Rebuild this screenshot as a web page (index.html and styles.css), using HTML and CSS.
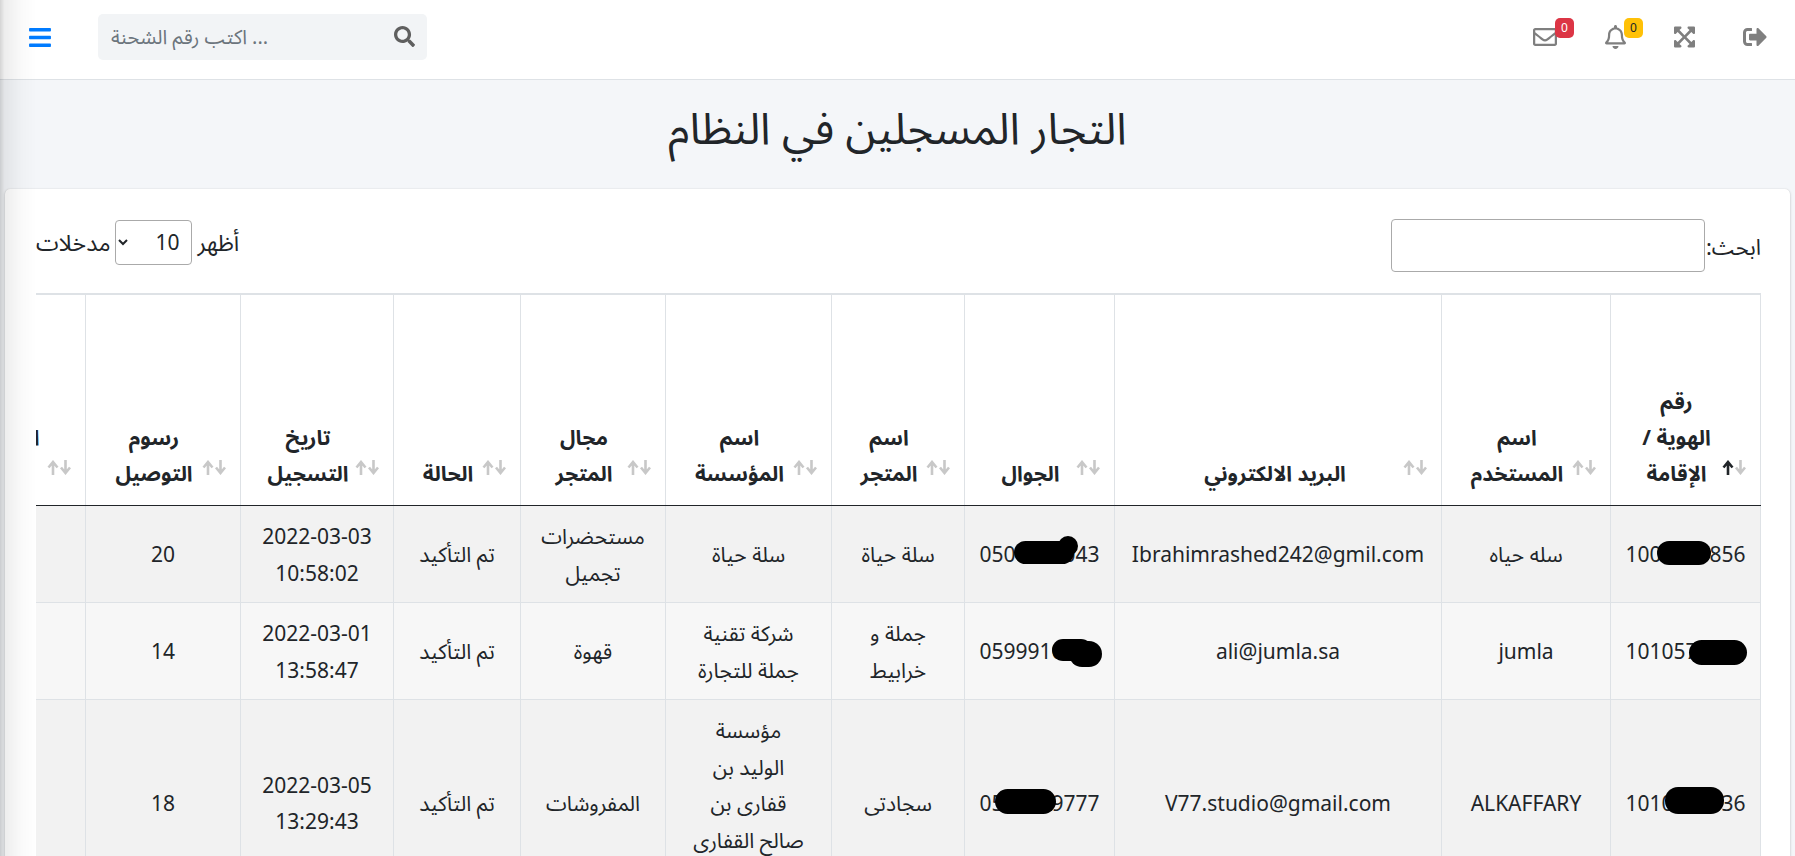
FILE: index.html
```html
<!DOCTYPE html>
<html lang="ar">
<head>
  <meta charset="UTF-8">
  <title>التجار المسجلين في النظام</title>
  <link rel="stylesheet" href="styles.css">
</head>
<body>
  <div class="sidebar-shadow"></div>

  <nav class="navbar">
    <a class="menu-btn" href="#">
      <svg class="icon-bars" viewBox="0 0 448 512"><path d="M16 132h416c8.837 0 16-7.163 16-16V76c0-8.837-7.163-16-16-16H16C7.163 60 0 67.163 0 76v40c0 8.837 7.163 16 16 16zm0 160h416c8.837 0 16-7.163 16-16v-40c0-8.837-7.163-16-16-16H16c-8.837 0-16 7.163-16 16v40c0 8.837 7.163 16 16 16zm0 160h416c8.837 0 16-7.163 16-16v-40c0-8.837-7.163-16-16-16H16c-8.837 0-16 7.163-16 16v40c0 8.837 7.163 16 16 16z"/></svg>
    </a>
    <form class="nav-search">
      <input type="text" placeholder="اكتب رقم الشحنة ...">
      <svg class="icon-search" viewBox="0 0 512 512"><path d="M505 442.7L405.3 343c-4.5-4.5-10.6-7-17-7H372c27.6-35.3 44-79.7 44-128C416 93.1 322.9 0 208 0S0 93.1 0 208s93.1 208 208 208c48.3 0 92.7-16.4 128-44v16.3c0 6.4 2.5 12.5 7 17l99.7 99.7c9.4 9.4 24.6 9.4 33.9 0l28.3-28.3c9.4-9.4 9.4-24.6.1-34zM208 336c-70.7 0-128-57.2-128-128 0-70.7 57.2-128 128-128 70.7 0 128 57.2 128 128 0 70.7-57.2 128-128 128z"/></svg>
    </form>
    <div class="nav-icons">
      <a class="nav-icon" href="#">
        <svg class="icon-mail" viewBox="0 0 512 512"><path d="M464 64H48C21.49 64 0 85.49 0 112v288c0 26.51 21.49 48 48 48h416c26.51 0 48-21.49 48-48V112c0-26.51-21.49-48-48-48zm0 48v40.805c-22.422 18.259-58.168 46.651-134.587 106.49-16.841 13.247-50.201 45.072-73.413 44.701-23.208.375-56.579-31.459-73.413-44.701C106.18 199.465 70.425 171.067 48 152.805V112h416zM48 400V214.398c22.914 18.251 55.409 43.862 104.938 82.646 21.857 17.205 60.134 55.186 103.062 54.955 42.717.231 80.509-37.199 103.053-54.947 49.528-38.783 82.032-64.401 104.947-82.653V400H48z"/></svg>
        <span class="badge badge-red">0</span>
      </a>
      <a class="nav-icon" href="#">
        <svg class="icon-bell" viewBox="0 0 448 512"><path d="M439.39 362.29c-19.32-20.76-55.47-51.99-55.47-154.29 0-77.7-54.48-139.9-127.94-155.16V32c0-17.67-14.32-32-31.98-32s-31.98 14.33-31.98 32v20.84C118.56 68.1 64.08 130.3 64.08 208c0 102.3-36.15 133.53-55.47 154.29-6 6.45-8.66 14.16-8.61 21.71.11 16.4 12.98 32 32.1 32h383.8c19.12 0 32-15.6 32.1-32 .05-7.55-2.61-15.27-8.61-21.71zM67.53 368c21.22-27.97 44.42-74.33 44.53-159.42 0-.2-.06-.38-.06-.58 0-61.86 50.14-112 112-112s112 50.14 112 112c0 .2-.06.38-.06.58.11 85.1 23.31 131.46 44.53 159.42H67.53zM224 512c35.32 0 63.97-28.65 63.97-64H160.03c0 35.35 28.65 64 63.97 64z"/></svg>
        <span class="badge badge-yellow">0</span>
      </a>
      <a class="nav-icon" href="#">
        <svg class="icon-expand" viewBox="0 0 448 512"><path d="M448 344v112a23.94 23.94 0 0 1-24 24H312c-21.39 0-32.09-25.9-17-41l36.2-36.2L224 295.6 116.77 402.9 153 439c15.09 15.1 4.39 41-17 41H24a23.94 23.94 0 0 1-24-24V344c0-21.4 25.89-32.1 41-17l36.19 36.2L184.46 256 77.18 148.7 41 185c-15.1 15.1-41 4.4-41-17V56a23.94 23.94 0 0 1 24-24h112c21.39 0 32.09 25.9 17 41l-36.2 36.2L224 216.4l107.23-107.3L295 73c-15.09-15.1-4.39-41 17-41h112a23.94 23.94 0 0 1 24 24v112c0 21.4-25.89 32.1-41 17l-36.19-36.2L263.54 256l107.28 107.3L407 327.1c15.1-15.2 41-4.5 41 16.9z"/></svg>
      </a>
      <a class="nav-icon" href="#">
        <svg class="icon-logout" viewBox="0 0 512 512"><path d="M497 273L329 441c-15 15-41 4.5-41-17v-96H152c-13.3 0-24-10.7-24-24v-96c0-13.3 10.7-24 24-24h136V88c0-21.4 25.9-32 41-17l168 168c9.3 9.4 9.3 24.6 0 34zM192 436v-40c0-6.6-5.4-12-12-12H96c-17.7 0-32-14.3-32-32V160c0-17.7 14.3-32 32-32h84c6.6 0 12-5.4 12-12V76c0-6.6-5.4-12-12-12H96c-53 0-96 43-96 96v192c0 53 43 96 96 96h84c6.6 0 12-5.4 12-12z"/></svg>
      </a>
    </div>
  </nav>

  <main class="content" dir="rtl">
    <h1 class="page-title">التجار المسجلين في النظام</h1>

    <section class="card">
      <div class="table-tools">
        <label class="filter">ابحث:<input type="search"></label>
        <label class="length">أظهر
          <select>
            <option>10</option>
          </select>
          مدخلات</label>
      </div>

      <div class="table-wrap">
        <table class="merchants">
          <colgroup>
            <col class="c-id"><col class="c-user"><col class="c-mail"><col class="c-phone"><col class="c-store">
            <col class="c-org"><col class="c-field"><col class="c-status"><col class="c-date"><col class="c-fee"><col class="c-last">
          </colgroup>
          <thead>
            <tr>
              <th class="sorted">رقم<br>الهوية /<br>الإقامة<svg class="sort" viewBox="0 0 25 15"><path class="up" d="M6 15V2M1.5 7.5L6 2l4.5 5.5"/><path class="down" d="M18.5 0v13M14 7.5l4.5 5.5L23 7.5"/></svg></th>
              <th>اسم<br>المستخدم<svg class="sort" viewBox="0 0 25 15"><path class="up" d="M6 15V2M1.5 7.5L6 2l4.5 5.5"/><path class="down" d="M18.5 0v13M14 7.5l4.5 5.5L23 7.5"/></svg></th>
              <th class="th-mail">البريد الالكتروني<svg class="sort" viewBox="0 0 25 15"><path class="up" d="M6 15V2M1.5 7.5L6 2l4.5 5.5"/><path class="down" d="M18.5 0v13M14 7.5l4.5 5.5L23 7.5"/></svg></th>
              <th>الجوال<svg class="sort" viewBox="0 0 25 15"><path class="up" d="M6 15V2M1.5 7.5L6 2l4.5 5.5"/><path class="down" d="M18.5 0v13M14 7.5l4.5 5.5L23 7.5"/></svg></th>
              <th>اسم<br>المتجر<svg class="sort" viewBox="0 0 25 15"><path class="up" d="M6 15V2M1.5 7.5L6 2l4.5 5.5"/><path class="down" d="M18.5 0v13M14 7.5l4.5 5.5L23 7.5"/></svg></th>
              <th>اسم<br>المؤسسة<svg class="sort" viewBox="0 0 25 15"><path class="up" d="M6 15V2M1.5 7.5L6 2l4.5 5.5"/><path class="down" d="M18.5 0v13M14 7.5l4.5 5.5L23 7.5"/></svg></th>
              <th>مجال<br>المتجر<svg class="sort" viewBox="0 0 25 15"><path class="up" d="M6 15V2M1.5 7.5L6 2l4.5 5.5"/><path class="down" d="M18.5 0v13M14 7.5l4.5 5.5L23 7.5"/></svg></th>
              <th>الحالة<svg class="sort" viewBox="0 0 25 15"><path class="up" d="M6 15V2M1.5 7.5L6 2l4.5 5.5"/><path class="down" d="M18.5 0v13M14 7.5l4.5 5.5L23 7.5"/></svg></th>
              <th>تاريخ<br>التسجيل<svg class="sort" viewBox="0 0 25 15"><path class="up" d="M6 15V2M1.5 7.5L6 2l4.5 5.5"/><path class="down" d="M18.5 0v13M14 7.5l4.5 5.5L23 7.5"/></svg></th>
              <th>رسوم<br>التوصيل<svg class="sort" viewBox="0 0 25 15"><path class="up" d="M6 15V2M1.5 7.5L6 2l4.5 5.5"/><path class="down" d="M18.5 0v13M14 7.5l4.5 5.5L23 7.5"/></svg></th>
              <th class="th-last">الإجراءات<br>عليها<svg class="sort" viewBox="0 0 25 15"><path class="up" d="M6 15V2M1.5 7.5L6 2l4.5 5.5"/><path class="down" d="M18.5 0v13M14 7.5l4.5 5.5L23 7.5"/></svg></th>
            </tr>
          </thead>
          <tbody>
            <tr>
              <td><span class="masked" dir="ltr">1000000856<i class="blob blob-id1"></i></span></td>
              <td>سله حياه</td>
              <td>Ibrahimrashed242@gmil.com</td>
              <td><span class="masked" dir="ltr">0500000043<i class="blob blob-ph1"></i><i class="blob blob-dot"></i></span></td>
              <td>سلة حياة</td>
              <td>سلة حياة</td>
              <td>مستحضرات<br>تجميل</td>
              <td>تم التأكيد</td>
              <td>2022-03-03 10:58:02</td>
              <td>20</td>
              <td></td>
            </tr>
            <tr>
              <td><span class="masked" dir="ltr">1010570000<i class="blob blob-id2"></i></span></td>
              <td>jumla</td>
              <td>ali@jumla.sa</td>
              <td><span class="masked" dir="ltr">0599910000<i class="blob blob-ph2"></i><i class="blob blob-ph2b"></i></span></td>
              <td>جملة و<br>خرابيط</td>
              <td>شركة تقنية<br>جملة للتجارة</td>
              <td>قهوة</td>
              <td>تم التأكيد</td>
              <td>2022-03-01 13:58:47</td>
              <td>14</td>
              <td></td>
            </tr>
            <tr>
              <td><span class="masked" dir="ltr">1010000036<i class="blob blob-id3"></i></span></td>
              <td>ALKAFFARY</td>
              <td>V77.studio@gmail.com</td>
              <td><span class="masked" dir="ltr">0500009777<i class="blob blob-ph3"></i></span></td>
              <td>سجادتى</td>
              <td>مؤسسة<br>الوليد بن<br>قفارى بن<br>صالح القفارى<br>&nbsp;</td>
              <td>المفروشات</td>
              <td>تم التأكيد</td>
              <td>2022-03-05 13:29:43</td>
              <td>18</td>
              <td></td>
            </tr>
          </tbody>
        </table>
      </div>
    </section>
  </main>
</body>
</html>
```

FILE: styles.css
```css
* { box-sizing: border-box; }
html, body { height: 100%; }
body { margin: 0; overflow: hidden; background: #f4f6f9; color: #212529; font-family: "Noto Sans", "Noto Sans Arabic", "DejaVu Sans", sans-serif; font-size: 21px; }

.sidebar-shadow { position: fixed; top: 0; left: 0; bottom: 0; width: 36px; z-index: 5; pointer-events: none; background: linear-gradient(to right, rgba(0,0,0,0.17), rgba(0,0,0,0.07) 12%, rgba(0,0,0,0.02) 60%, rgba(0,0,0,0)); }

/* top bar */
.navbar { display: flex; align-items: center; height: 80px; padding-left: 29px; background: #fff; border-bottom: 1px solid #dee2e6; }
.menu-btn { display: flex; margin-top: -4px; }
.icon-bars { width: 22px; height: 25px; fill: #007bff; }
.nav-search { display: flex; align-items: center; width: 329px; height: 46px; margin: -6px 0 0 47px; padding: 0 12px 0 13px; background: #f2f4f6; border-radius: 5px; }
.nav-search input { flex: 1; min-width: 0; border: 0; padding: 0; background: transparent; font: inherit; font-size: 20px; outline: none; }
.nav-search input::placeholder { color: #6c757d; opacity: 1; }
.icon-search { width: 21px; height: 21px; fill: #5f5f5f; }
.nav-icons { display: flex; align-items: center; margin-left: auto; margin-top: -6px; padding-right: 28px; }
.nav-icon { position: relative; display: flex; margin-left: 48px; }
.nav-icon svg { fill: #7f7f7f; }
.icon-mail { width: 24px; height: 24px; }
.icon-bell { width: 21px; height: 24px; }
.icon-expand { width: 21px; height: 24px; }
.icon-logout { width: 24px; height: 24px; }
.badge { position: absolute; top: -7px; left: 19px; width: 19px; height: 20px; border-radius: 5px; font-size: 12px; line-height: 20px; text-align: center; }
.badge-red { left: 22px; background: #dc3545; color: #fff; }
.badge-yellow { background: #ffc107; color: #212529; }

/* page */
.page-title { margin: 0; height: 109px; padding-top: 19px; font-size: 44px; font-weight: 400; line-height: 56px; text-align: center; }
.card { margin: 0 5px; height: 700px; padding: 30px 29px 0 31px; background: #fff; border-radius: 5px; box-shadow: 0 0 1px rgba(0,0,0,.125), 0 1px 3px rgba(0,0,0,.2); }

.table-tools { display: flex; justify-content: space-between; align-items: flex-start; height: 74px; }
.filter, .length { display: flex; align-items: center; line-height: 46px; }
.filter { gap: 1px; font-size: 22px; }
.length { gap: 5px; font-size: 23px; }
.filter input { width: 314px; height: 53px; border: 1px solid #aaa; border-radius: 4px; background: #fff; }
.length select { width: 77px; height: 45px; padding: 0 8px; border: 1px solid #aaa; border-radius: 4px; background: #fff; font: inherit; font-size: 21px; color: #212529; }

/* table */
.table-wrap { overflow: hidden; border-top: 2px solid #dee2e6; }
.merchants { width: 1825px; border-collapse: collapse; table-layout: fixed; }
.c-id { width: 150px; }
.c-user { width: 169px; }
.c-mail { width: 327px; }
.c-phone { width: 150px; }
.c-store { width: 133px; }
.c-org { width: 166px; }
.c-field { width: 145px; }
.c-status { width: 127px; }
.c-date { width: 153px; }
.c-fee { width: 155px; }
.c-last { width: 150px; }

.merchants th, .merchants td { border: 1px solid #dee2e6; text-align: center; }
.merchants th { position: relative; height: 210px; padding: 12px 30px 14px 12px; line-height: 36px; vertical-align: bottom; font-weight: 700; border-top: 0; border-bottom: 1px solid #212529; background: #fff; }
.merchants th.th-mail { padding-right: 18px; }
.merchants th.th-last { padding-right: 38px; }
.merchants td { padding: 12.5px 12px 10.5px; line-height: 36.5px; vertical-align: middle; background: #f7f7f7; }
.merchants tbody tr:nth-child(odd) td { background: #f2f2f2; }

.sort { position: absolute; right: 13px; bottom: 30px; width: 25px; height: 15px; fill: none; stroke-width: 2.6; }
.sort .up, .sort .down { stroke: #c8c8c8; }
.sorted .sort .up { stroke: #212529; }

/* hand drawn redactions over the numbers */
.masked { position: relative; display: inline-block; }
.blob { position: absolute; background: #000; border-radius: 13px; }
.blob-id1 { left: 32px; top: 5px; width: 54px; height: 24px; }
.blob-ph1 { left: 35px; top: 5px; width: 60px; height: 23px; }
.blob-dot { left: 79px; top: 0; width: 20px; height: 20px; }
.blob-id2 { left: 64px; top: 7px; width: 58px; height: 25px; }
.blob-ph2 { left: 73px; top: 6px; width: 40px; height: 22px; }
.blob-ph2b { left: 90px; top: 8px; width: 33px; height: 26px; }
.blob-id3 { left: 40px; top: 2px; width: 59px; height: 27px; }
.blob-ph3 { left: 16px; top: 4px; width: 61px; height: 25px; }
```
